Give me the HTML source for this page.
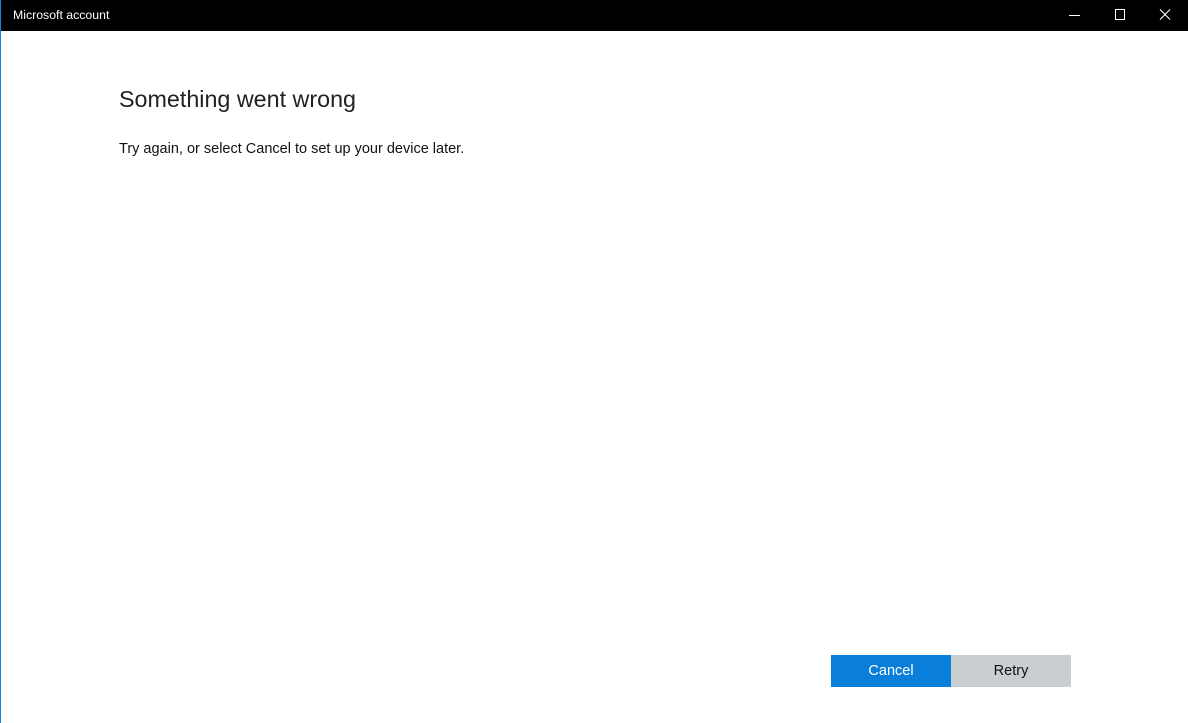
<!DOCTYPE html>
<html><head><style>
html,body{margin:0;padding:0;width:1188px;height:723px;overflow:hidden;background:#fff;font-family:"Liberation Sans",sans-serif;position:relative}
.bar{position:absolute;left:0;top:0;width:1188px;height:31px;background:#000;color:#fff}
.bar .t{position:absolute;left:13px;top:8px;font-size:12.3px}
.lb{position:absolute;left:0;top:0;width:1px;height:723px;background:#1883d7}
h1{position:absolute;left:119px;top:86px;margin:0;font-weight:300;font-size:23.3px;color:#222;white-space:nowrap}
p{position:absolute;left:119px;top:141px;margin:0;font-size:14.5px;color:#111;white-space:nowrap}
.btn{position:absolute;top:655px;height:32px;width:120px;line-height:32px;text-align:center;font-size:14.5px}
</style></head><body>
<div class="bar"><span class="t">Microsoft account</span>
<svg width="1188" height="31" style="position:absolute;left:0;top:0">
<line x1="1069" y1="15.5" x2="1080" y2="15.5" stroke="#fff" stroke-width="1"/>
<rect x="1115.5" y="9.5" width="9" height="10" fill="none" stroke="#fff" stroke-width="1"/>
<path d="M1160 9.5L1170 19.5M1170 9.5L1160 19.5" stroke="#fff" stroke-width="1.1"/>
</svg></div>
<div class="lb"></div>
<h1>Something went wrong</h1>
<p>Try again, or select Cancel to set up your device later.</p>
<div class="btn" style="left:831px;background:#0a7fd9;color:#fff">Cancel</div>
<div class="btn" style="left:951px;background:#c9cfd0;color:#111">Retry</div>
</body></html>
